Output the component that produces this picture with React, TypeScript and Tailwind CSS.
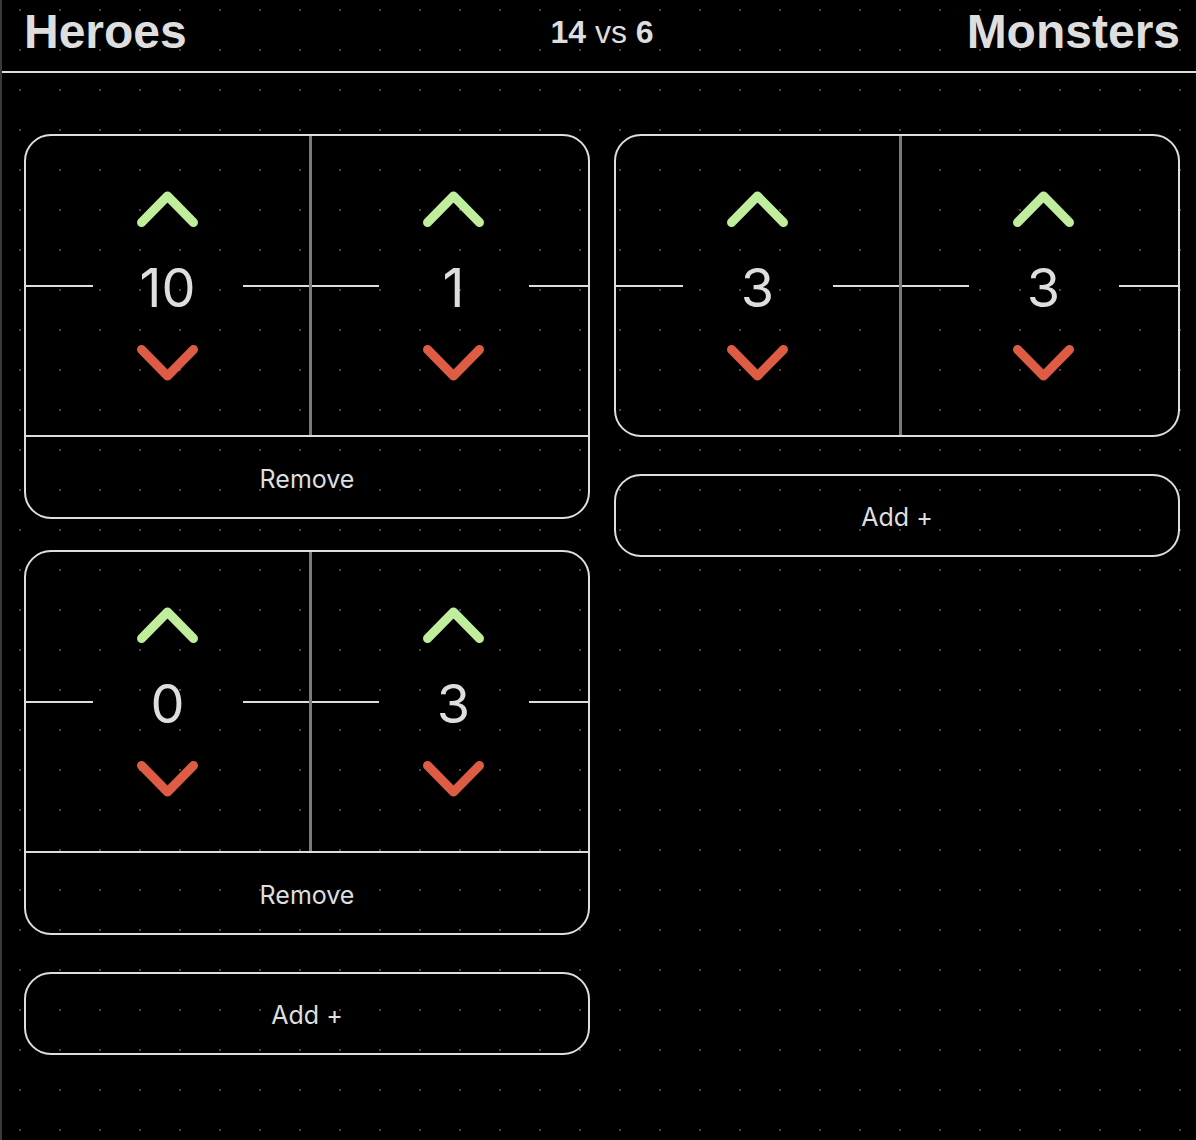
import { useState } from "react";

type Pair = [number, number];

const textColor = "text-[#dedede]";

function ChevronUp() {
  return (
    <svg width="61" height="36" viewBox="0 0 61 36" fill="none">
      <path
        d="M4.5 31.5 L30.5 5 L56.5 31.5"
        stroke="#c0ee9c"
        strokeWidth="9"
        strokeLinecap="round"
        strokeLinejoin="round"
      />
    </svg>
  );
}

function ChevronDown() {
  return (
    <svg width="61" height="36" viewBox="0 0 61 36" fill="none">
      <path
        d="M4.5 4.5 L30.5 31 L56.5 4.5"
        stroke="#de5b44"
        strokeWidth="9"
        strokeLinecap="round"
        strokeLinejoin="round"
      />
    </svg>
  );
}

function Counter({
  value,
  onChange,
}: {
  value: number;
  onChange: (next: number) => void;
}) {
  return (
    <div className="flex h-full w-[283px] shrink-0 flex-col items-center justify-center gap-[27px]">
      <button type="button" onClick={() => onChange(value + 1)}>
        <ChevronUp />
      </button>
      <div className="flex h-[64px] w-full items-center">
        <div className="h-[2px] flex-1 bg-[#dedede]" />
        <span className="w-[150px] pt-[5px] text-center font-['Inter',sans-serif] text-[54px] leading-none">
          {value}
        </span>
        <div className="h-[2px] flex-1 bg-[#dedede]" />
      </div>
      <button type="button" onClick={() => onChange(Math.max(0, value - 1))}>
        <ChevronDown />
      </button>
    </div>
  );
}

function Card({
  pair,
  onChange,
  onRemove,
}: {
  pair: Pair;
  onChange: (next: Pair) => void;
  onRemove?: () => void;
}) {
  return (
    <div className="overflow-hidden rounded-[27px] border-2 border-[#dedede]">
      <div className="flex h-[299px]">
        <Counter value={pair[0]} onChange={(v) => onChange([v, pair[1]])} />
        <div className="w-[3px] shrink-0 bg-[#7a7a7a]" />
        <Counter value={pair[1]} onChange={(v) => onChange([pair[0], v])} />
      </div>
      {onRemove && (
        <button
          type="button"
          onClick={onRemove}
          className="flex h-[82px] w-full items-center justify-center border-t-2 border-[#dedede] pt-[5px] font-['Inter',sans-serif] text-[25px]"
        >
          Remove
        </button>
      )}
    </div>
  );
}

function AddButton({ onClick }: { onClick: () => void }) {
  return (
    <button
      type="button"
      onClick={onClick}
      className="mt-[37px] flex h-[83px] w-full items-center justify-center rounded-[27px] border-2 border-[#dedede] pt-[4px] font-['Inter',sans-serif] text-[25px]"
    >
      Add +
    </button>
  );
}

export default function App() {
  const [heroes, setHeroes] = useState<Pair[]>([
    [10, 1],
    [0, 3],
  ]);
  const [monsters, setMonsters] = useState<Pair[]>([[3, 3]]);

  const total = (list: Pair[]) => list.reduce((sum, [a, b]) => sum + a + b, 0);

  return (
    <div
      className={`min-h-screen border-l-2 border-[#3a3a3a] bg-black bg-[radial-gradient(circle,#474747_0.8px,transparent_1.3px)] bg-[length:40px_40px] bg-[position:0px_-10px] bg-origin-border ${textColor}`}
    >
      <header className="grid h-[73px] grid-cols-[1fr_auto_1fr] items-center border-b-2 border-[#dedede] pb-[8px] pl-[22px] pr-[16px] font-['Liberation_Sans',Arial,sans-serif]">
        <h1 className="text-[48px] font-bold leading-none">Heroes</h1>
        <div className="text-[32px] leading-none">
          <span className="font-bold">{total(heroes)}</span> vs{" "}
          <span className="font-bold">{total(monsters)}</span>
        </div>
        <h1 className="text-right text-[48px] font-bold leading-none">
          Monsters
        </h1>
      </header>

      <main className="grid grid-cols-2 gap-[24px] pb-[60px] pl-[22px] pr-[16px] pt-[61px]">
        <section className="flex flex-col">
          {heroes.map((pair, i) => (
            <div key={i} className={i > 0 ? "mt-[31px]" : ""}>
              <Card
                pair={pair}
                onChange={(next) =>
                  setHeroes(heroes.map((p, j) => (j === i ? next : p)))
                }
                onRemove={() => setHeroes(heroes.filter((_, j) => j !== i))}
              />
            </div>
          ))}
          <AddButton onClick={() => setHeroes([...heroes, [0, 0]])} />
        </section>

        <section className="flex flex-col">
          {monsters.map((pair, i) => (
            <div key={i} className={i > 0 ? "mt-[31px]" : ""}>
              <Card
                pair={pair}
                onChange={(next) =>
                  setMonsters(monsters.map((p, j) => (j === i ? next : p)))
                }
              />
            </div>
          ))}
          <AddButton onClick={() => setMonsters([...monsters, [0, 0]])} />
        </section>
      </main>
    </div>
  );
}
